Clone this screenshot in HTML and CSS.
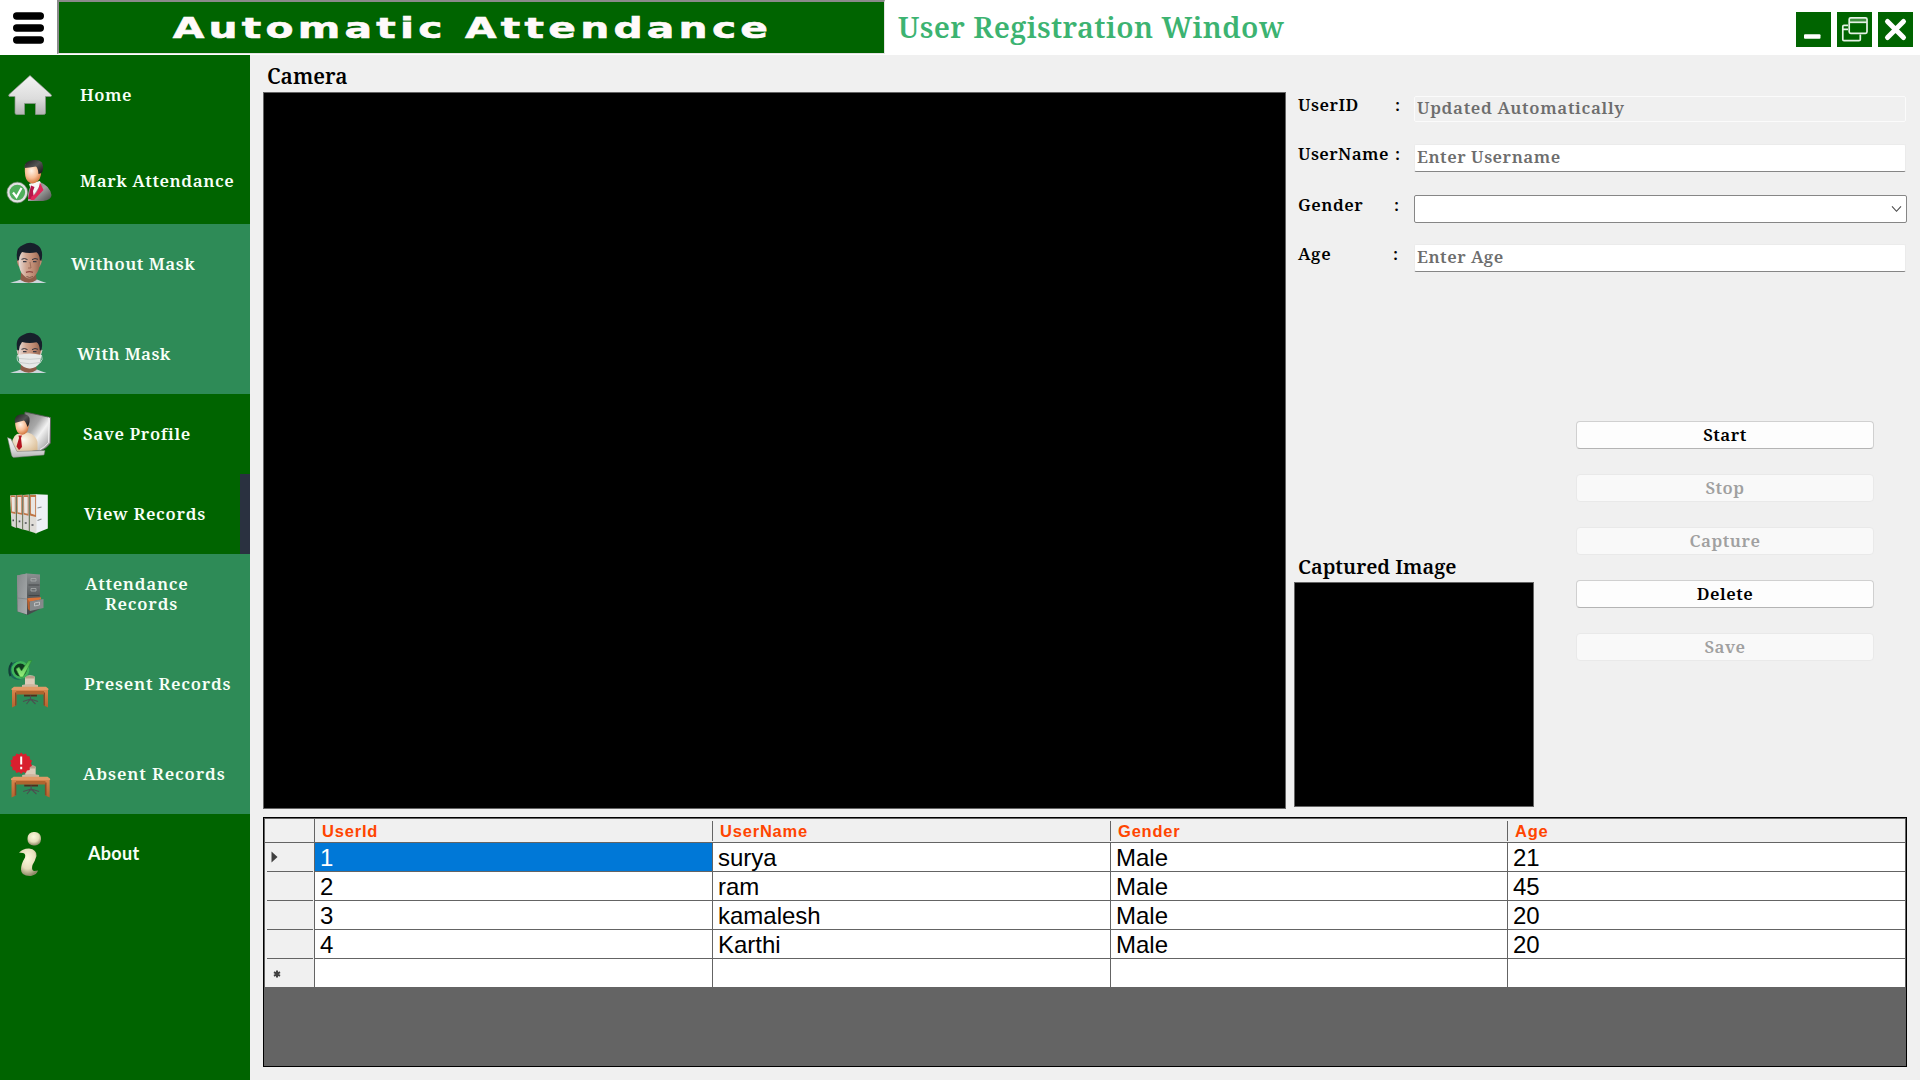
FILE: index.html
```html
<!DOCTYPE html>
<html lang="en">
<head>
<meta charset="utf-8">
<title>User Registration Window</title>
<link rel="stylesheet" href="styles.css">
</head>
<body>
<svg class="defs" width="0" height="0" aria-hidden="true">
  <defs>
    <linearGradient id="silver" x1="0" y1="0" x2="0" y2="1"><stop offset="0" stop-color="#f4f4f4"/><stop offset=".6" stop-color="#dcdcdc"/><stop offset="1" stop-color="#b4b4b4"/></linearGradient>
    <linearGradient id="panel" x1="0" y1="0" x2="1" y2="1"><stop offset="0" stop-color="#777"/><stop offset=".4" stop-color="#a8a8a8"/><stop offset=".6" stop-color="#f2f2f2"/><stop offset="1" stop-color="#8a8a8a"/></linearGradient>
    <radialGradient id="skin" cx=".4" cy=".35" r=".75"><stop offset="0" stop-color="#fff3e8"/><stop offset=".5" stop-color="#f7bd94"/><stop offset="1" stop-color="#c95f22"/></radialGradient>
    <linearGradient id="hair" x1="0" y1="0" x2="1" y2="1"><stop offset="0" stop-color="#1a1a1a"/><stop offset=".5" stop-color="#555"/><stop offset="1" stop-color="#111"/></linearGradient>
    <linearGradient id="suit" x1="0" y1="0" x2="1" y2="1"><stop offset="0" stop-color="#777"/><stop offset=".5" stop-color="#a2a2a2"/><stop offset="1" stop-color="#4a4a4a"/></linearGradient>
    <radialGradient id="shirt" cx=".45" cy=".35" r=".7"><stop offset="0" stop-color="#fffaf0"/><stop offset="1" stop-color="#d9bb92"/></radialGradient>
    <linearGradient id="face" x1="0" y1="0" x2="1" y2="0"><stop offset="0" stop-color="#e6dcd8"/><stop offset=".35" stop-color="#d2a792"/><stop offset=".7" stop-color="#bd8870"/><stop offset="1" stop-color="#93644f"/></linearGradient>
    <linearGradient id="wood" x1="0" y1="0" x2="0" y2="1"><stop offset="0" stop-color="#d9894f"/><stop offset="1" stop-color="#b4632f"/></linearGradient>
    <linearGradient id="steel" x1="0" y1="0" x2="0" y2="1"><stop offset="0" stop-color="#8d9193"/><stop offset=".5" stop-color="#5a5e60"/><stop offset="1" stop-color="#44484a"/></linearGradient>
    <linearGradient id="steelside" x1="0" y1="0" x2="1" y2="1"><stop offset="0" stop-color="#85898b"/><stop offset="1" stop-color="#a9adaf"/></linearGradient>
    <linearGradient id="tick" x1="0" y1="0" x2="0" y2="1"><stop offset="0" stop-color="#3fae4a"/><stop offset="1" stop-color="#9cf27e"/></linearGradient>
    <radialGradient id="ivory" cx=".45" cy=".35" r=".65"><stop offset="0" stop-color="#fdf9df"/><stop offset=".6" stop-color="#e6dfbc"/><stop offset="1" stop-color="#8f8a68"/></radialGradient>
    <g id="head">
      <path d="M10 49Q18 46.500 21 45.500H37Q41 47 46.500 49Z" fill="#ccd6dc"/>
      <path d="M21 39L20.500 46Q29 51.500 36.500 46L36 39Z" fill="#8e5d48"/>
      <path d="M17.300 25Q16.200 27 18.500 32L19.500 33 20 25ZM41.500 25Q42.600 27 40 32L39 33 38.500 25Z" fill="#c08a72"/>
      <path d="M18.500 20Q18 34 21.500 39 26 44.500 29.500 44.500 33 44.500 37 39 40.500 34 40.500 20 36 15 29 15 21 15 18.500 20Z" fill="url(#face)"/>
      <path d="M17.500 27Q14.500 14 23 11 31 6.500 38 11.500 44 16 41.300 27L39.800 26Q39.500 20 36.500 18.300 29 20 22 18 19 22 19 26Z" fill="#17202b"/>
      <path d="M21.500 25.300Q24.500 23.600 27.500 25.600M32 25.600Q35 23.600 38 25.300" fill="none" stroke="#33333d" stroke-width="1"/>
      <path d="M23 27.600H26.500M33 27.600H36.500" stroke="#3a3a44" stroke-width="1.100"/>
    </g>
    <g id="desk">
      <path d="M25 32V23.500Q26 21.700 30 21.700 34.500 21.800 34.800 24V32Z" fill="#dccbb8"/>
      <path d="M25.300 22.500H34.500V25H25.300Z" fill="#b89f89"/>
      <path d="M22 31.500Q30 29.500 38 31.500V34H22Z" fill="#cdb7a1"/>
      <path d="M24 41H37V43H24Z" fill="#4e2e20"/>
      <path d="M30.500 42V47M23 48L30.500 45.500 38 48M26.500 50.500L30.500 45.500 35.500 50.500" stroke="#4c4f51" stroke-width="1.100" fill="none"/>
      <path d="M12 35V54L16.200 52V39.500H44V52L48 54V35Z" fill="url(#wood)"/>
      <path d="M15 39V52.500L16.500 51.500V39ZM43.500 39V51.500L45 52.500V39Z" fill="#8a4a26"/>
      <path d="M14 33.300H46L48.400 35.300V36.500H11.500V35.300Z" fill="#e09a66"/>
      <path d="M16.200 37.500H44V41H16.200Z" fill="#b0652f"/>
    </g>
  </defs>
</svg>

<div class="window">
  <header class="topbar">
    <button class="menu" aria-label="Menu">
      <svg width="31" height="32" viewBox="0 0 31 32"><path d="M3.700 4H27.300M3.700 16H27.300M3.700 28H27.300" stroke="#000" stroke-width="7.400" stroke-linecap="round"/></svg>
    </button>
    <div class="brand"><span class="brand-text">Automatic Attendance</span></div>
    <h1 class="page-title">User Registration Window</h1>
    <div class="window-buttons">
      <svg width="35" height="35" viewBox="0 0 35 35"><rect width="35" height="35" fill="#006400"/><rect x="8" y="22.300" width="16.500" height="4.400" rx="1" fill="#fff"/></svg>
      <svg width="35" height="35" viewBox="0 0 35 35"><rect width="35" height="35" fill="#006400"/><path d="M13 6.500H29V10.500H13Z" fill="#3f8f3f"/><g fill="none" stroke="#e6f2e6" stroke-width="1.700"><rect x="12.200" y="5.800" width="17.800" height="15.500" rx="1.500"/><path d="M12.500 10.300H30"/><path d="M11 13.300H7Q5.800 13.300 5.800 14.500V27.500Q5.800 28.700 7 28.700H22Q23.300 28.700 23.300 27.500V22.500M6 17.300H11"/></g></svg>
      <svg width="35" height="35" viewBox="0 0 35 35"><rect width="35" height="35" fill="#006400"/><path d="M9.500 9.500L25.500 25.500M25.500 9.500L9.500 25.500" stroke="#fff" stroke-width="5" stroke-linecap="round"/></svg>
    </div>
  </header>

  <div class="body">
    <nav class="sidebar">
      <a class="item home">
        <svg class="icon" viewBox="0 0 60 60"><path d="M30 10.500L9 29.500Q8 31.500 10 31.500H15V48Q15 49.500 17 49.500H24.500V38.500H35.500V49.500H43.500Q45.500 49.500 45.500 48V31.500H50.500Q52.500 31 51 29.500Z" fill="url(#silver)" stroke="#8e958e" stroke-width=".7"/></svg>
        <span class="label">Home</span>
      </a>
      <a class="item mark">
        <svg class="icon" viewBox="0 0 60 60"><path d="M28 49Q27 36 34 32.500L40 31Q50 35 51.500 44 51.500 49 43 50H28Z" fill="url(#suit)"/><path d="M29 33L35 31 40 30 41 33 33 45Z" fill="#f7f7f7"/><path d="M31 34.500L34.500 36 33 40 34 48H28Z" fill="#b8154a"/><path d="M40 31.500L43.500 39 34 49H30.500L31.500 45.500Q38 43 40 31.500Z" fill="#e02859"/><path d="M25 13Q24 28 28 30.500 33 34.500 38 30 42 27 41.500 13Z" fill="url(#skin)"/><path d="M24.500 17Q24 12 29 10 38 7.500 42 11.500 44.500 18 41.500 22L38.500 23Q38 17 36 15.500 29 16.500 24.500 17Z" fill="url(#hair)"/><circle cx="17.300" cy="41.500" r="9" fill="#4fae5b" stroke="#e2e2e2" stroke-width="2.400"/><circle cx="17.300" cy="41.500" r="10.400" fill="none" stroke="#8c8c8c" stroke-width=".6"/><path d="M13 41.500L16.500 46 21.500 37" fill="none" stroke="#fff" stroke-width="2.200"/></svg>
        <span class="label">Mark Attendance</span>
      </a>
      <div class="submenu">
        <a class="item without">
          <svg class="icon" viewBox="0 0 60 60"><use href="#head"/><path d="M30 28L31 34H28" fill="none" stroke="#9c6a55" stroke-width=".9"/><path d="M26 38.300Q29.500 37 33 38.300" fill="none" stroke="#8d4740" stroke-width="1.400"/><path d="M26.500 42.500Q29.500 44.500 33 42.500" fill="none" stroke="#7d5848" stroke-width="1"/></svg>
          <span class="label">Without Mask</span>
        </a>
        <a class="item with">
          <svg class="icon" viewBox="0 0 60 60"><use href="#head"/><path d="M18.500 31L17 26M40.500 31L42 26M20 39Q16 37 17.500 31M40 39Q43.500 36 41.500 31" fill="none" stroke="#dfe6e4" stroke-width=".8"/><path d="M18 31Q29.500 28 41.500 31L40 39Q36 44 30 44.500 23 44 19.500 39Z" fill="#e8e9e8"/><path d="M19 34.500Q29.500 36 41 34.500M19.500 38.500Q29.500 41 40 38.500" fill="none" stroke="#c3c6c5" stroke-width=".8"/></svg>
          <span class="label">With Mask</span>
        </a>
      </div>
      <a class="item save">
        <svg class="icon" viewBox="0 0 60 60"><path d="M25 8L50.500 13.500V39Q46 45 40 47L22 46Z" fill="url(#panel)" stroke="#555" stroke-width=".8"/><path d="M48.500 13.500V38.500Q45 43 40 45.500" fill="none" stroke="#eee" stroke-width=".9"/><path d="M11.500 47Q11 33 17 30L28 28.500Q36 31 37.500 38V46L20 49Z" fill="url(#shirt)"/><path d="M15 16Q15 27 19 29.500 23.500 32.500 27 28 29.500 24 28.500 15Z" fill="url(#skin)"/><path d="M15 19Q13.500 12 20 10.500 28 9 29.500 14 30 20 27.500 23 26 18 24 16.500 19 17.500 15 19Z" fill="url(#hair)"/><path d="M18.500 31.500H22L21 34 22 43 19 46 16.500 42.500 19 34Z" fill="#b3141f"/><path d="M7.500 33.500L11 35 17 47.500 45 46.500 44 51 13.500 53.500Q12 53 11.500 51Z" fill="url(#silver)" stroke="#777" stroke-width=".5"/></svg>
        <span class="label">Save Profile</span>
      </a>
      <a class="item view">
        <svg class="icon" viewBox="0 0 60 60"><path d="M36 10.300L47.800 10.800V44.500L35.500 49.500Z" fill="#eef1f6"/><path d="M10 11.500L16 11V44L11.500 42Z" fill="#d9d7d3"/><path d="M16.500 11L22.500 10.800V45.500L16.800 43.500Z" fill="#d9d7d3"/><path d="M22.800 11L29 10.500V47L23 45.500Z" fill="#d9d7d3"/><path d="M29.500 10.500L36.500 10.300V49.500L29.500 47.300Z" fill="#dfdcd8"/><path d="M10.500 11.500H15.500L15.500 30 11.200 29ZM17 11.300H22V30.700L17.300 29.700ZM23.300 11.200H28.500V31.700L23.500 30.500ZM30 11H36V33L30 31.500Z" fill="#bf7444"/><path d="M11.300 13H14.800V28L12 27.500ZM17.600 13H21.300V29L17.900 28.300ZM24 13H27.700V29.800L24.200 29ZM30.800 13H35.200V31L30.900 29.500Z" fill="#e9e6e3"/><path d="M16.300 11V44M22.700 11V46M29.200 11V47.500" stroke="#75695f" stroke-width=".8"/><path d="M12.500 36.300H14M18.700 37.300H20.300M24.800 39H26.700M31.500 41H33.500" stroke="#4d4f54" stroke-width="1.700"/><path d="M37.500 24L41.500 23M37.500 36.500L41.500 35" stroke="#85888c" stroke-width="1.100"/></svg>
        <span class="label">View Records</span>
      </a>
      <div class="submenu three">
        <a class="item attendance">
          <svg class="icon" viewBox="0 0 60 60"><path d="M17 11.500L27 9.500 40 10.500V45L27.500 51 17.500 47.500Z" fill="url(#steel)"/><path d="M17 11.500L27 9.500V50.500L17.500 47.500Z" fill="url(#steelside)"/><path d="M17.500 34L27 35" stroke="#7d8284" stroke-width=".8"/><path d="M28.500 21H39.500M28.500 31.500H39.500" stroke="#3c4042" stroke-width=".8"/><path d="M31 14.500H36V17H31ZM31 24.500H36V27H31Z" fill="none" stroke="#a9adad" stroke-width=".8"/><path d="M27 34.500L29 34 41 33.300V35.500L29 38Z" fill="#d9733a"/><path d="M29.500 37.500L43.500 35V44L30 47Z" fill="#85898b"/><path d="M34.500 39L39.500 38V41L34.500 42Z" fill="none" stroke="#c9cccc" stroke-width=".8"/><path d="M27 35L29.500 37.500 30 47 28 45Z" fill="#b9602f"/></svg>
          <span class="label">Attendance<br><span class="second">Records</span></span>
        </a>
        <a class="item present">
          <svg class="icon" viewBox="0 0 60 60"><use href="#desk" y="-.5"/><circle cx="18" cy="16.500" r="9.300" fill="#1b6a5a"/><path d="M10.500 22Q7.500 15 12 8.500" fill="none" stroke="#123f38" stroke-width="2"/><circle cx="20.300" cy="16" r="7.700" fill="#0f3a20" stroke="#3fb45a" stroke-width="2.600"/><path d="M16 15L19 13 21.500 17 28.500 6.500 31.800 6.500 23 23H20Z" fill="url(#tick)" stroke="#2c8c34" stroke-width=".6"/></svg>
          <span class="label">Present Records</span>
        </a>
        <a class="item absent">
          <svg class="icon" viewBox="0 0 60 60"><use href="#desk" transform="matrix(1.060 0 0 1 -1.200 -.5)"/><path d="M21.200 8.500l2 2 2.800-1 1 2.600 2.800.3 0 2.800 2.300 1.600-1.200 2.400 1.200 2.600-2.400 1.500 0 2.800-2.800.3-1.100 2.600-2.700-.9-2 2-2-2-2.800.9-1-2.600-2.800-.3 0-2.800-2.300-1.600 1.200-2.400-1.200-2.600 2.400-1.500 0-2.800 2.700-.3 1.100-2.600 2.800 1z" fill="#d91f2e"/><path d="M21.200 12.500V20.500M21.200 22.800V25.300" stroke="#fff" stroke-width="2"/></svg>
          <span class="label">Absent Records</span>
        </a>
      </div>
      <a class="item about">
        <svg class="icon" viewBox="0 0 60 60"><rect x="27.500" y="8" width="13.500" height="13.500" rx="6" fill="url(#ivory)"/><path d="M19 29Q22 24.500 29 24.500 37 25.500 36.500 32 35 37 32.500 41 31 46 34 47 36.500 46.500 38 46.500 37 50.500 31 52 21 52.500 21 45.500 21 40 25 33.500 26 29.500 23 29 20.500 28.500 19 29Z" fill="url(#ivory)"/></svg>
        <span class="label">About</span>
      </a>
    </nav>

    <main class="content">
      <section class="camera">
        <h2 class="caption">Camera</h2>
        <div class="preview"></div>
      </section>

      <section class="side">
        <form class="form">
          <div class="row user-id"><span class="name">UserID</span><span class="colon">:</span><input class="field disabled" placeholder="Updated Automatically" disabled></div>
          <div class="row user-name"><span class="name">UserName</span><span class="colon">:</span><input class="field" placeholder="Enter Username"></div>
          <div class="row gender"><span class="name">Gender</span><span class="colon">:</span><div class="combo"><svg width="11" height="8" viewBox="0 0 11 8"><path d="M1 1.300L5.500 6.300 10 1.300" fill="none" stroke="#4a4a4a" stroke-width="1.100"/></svg></div></div>
          <div class="row age"><span class="name">Age</span><span class="colon">:</span><input class="field" placeholder="Enter Age"></div>
        </form>
        <div class="lower">
          <div class="captured">
            <h2 class="caption">Captured Image</h2>
            <div class="thumb"></div>
          </div>
          <div class="actions">
            <button class="btn">Start</button>
            <button class="btn" disabled>Stop</button>
            <button class="btn" disabled>Capture</button>
            <button class="btn">Delete</button>
            <button class="btn" disabled>Save</button>
          </div>
        </div>
      </section>

      <section class="records">
        <div class="grid">
          <div class="corner"></div><div class="th">UserId</div><div class="th">UserName</div><div class="th">Gender</div><div class="th last">Age</div>
          <div class="rh"><svg width="7" height="12" viewBox="0 0 7 12"><path d="M.5 .5L6.500 6 .5 11.500Z" fill="#404040"/></svg></div><div class="td selected">1</div><div class="td">surya</div><div class="td">Male</div><div class="td">21</div>
          <div class="rh"></div><div class="td">2</div><div class="td">ram</div><div class="td">Male</div><div class="td">45</div>
          <div class="rh"></div><div class="td">3</div><div class="td">kamalesh</div><div class="td">Male</div><div class="td">20</div>
          <div class="rh"></div><div class="td">4</div><div class="td">Karthi</div><div class="td">Male</div><div class="td">20</div>
          <div class="rh new"><svg width="8" height="8" viewBox="0 0 8 8"><path d="M4 .5V7.500M1 2.200L7 5.800M7 2.200L1 5.800" stroke="#404040" stroke-width="2"/></svg></div><div class="td"></div><div class="td"></div><div class="td"></div><div class="td"></div>
        </div>
      </section>
    </main>
  </div>
</div>
</body>
</html>
```

FILE: styles.css
```css
* { box-sizing: border-box; }
body {
  margin: 0;
  background: #f0f0f0;
  color: #000;
  font: 600 17px/20px "Noto Serif", "DejaVu Serif", serif;
  letter-spacing: .5px;
}
h1, h2 { margin: 0; font-weight: 600; }
button, input { font: inherit; letter-spacing: inherit; }
svg { display: block; flex: none; }
.defs { position: absolute; }
.window { width: 1920px; height: 1080px; display: flex; flex-direction: column; overflow: hidden; }

/* Title bar */
.topbar { height: 55px; display: flex; align-items: flex-start; background: #fff; }
.menu { width: 57px; height: 55px; padding: 12px 0 0 13px; display: flex; align-items: flex-start; border: 0; background: none; }
.brand {
  width: 828px; height: 54px;
  display: flex; justify-content: center; align-items: center;
  border: 2px solid; border-color: #8a8a8a #e3e3e3 #e3e3e3 #8a8a8a;
  border-right-width: 1px; border-bottom-width: 1px;
  background: #006400; color: #fffafa;
}
.brand-text {
  padding: 1px 0 0 2px;
  font: 700 29px/40px "DejaVu Sans", sans-serif;
  letter-spacing: 3px;
  white-space: nowrap;
  -webkit-text-stroke: .6px #fffafa;
  transform: scaleX(1.407);
}
.page-title {
  margin-left: 13px;
  color: #3cb371;
  font-size: 29px; line-height: 54px;
  letter-spacing: .4px;
  white-space: nowrap;
}
.window-buttons { display: flex; gap: 6px; margin-left: auto; padding: 12px 7px 0 0; }

.body { flex: 1; display: flex; }

/* Sidebar */
.sidebar { width: 250px; background: #006400; color: #f8fff8; }
.item { height: 80px; display: flex; align-items: center; }
.icon { width: 60px; height: 60px; }
.label { white-space: nowrap; }
.mark { height: 86px; margin-top: 3px; }
.submenu { display: flex; flex-direction: column; gap: 10px; height: 170px; background: #2e8b57; }
.three { height: 260px; }
.home .label, .mark .label { margin-left: 20px; letter-spacing: .55px; }
.without .label { margin-left: 11px; }
.with .label { margin-left: 17px; letter-spacing: .35px; }
.save .label { margin-left: 23px; letter-spacing: .6px; }
.view { border-right: 10px solid #2a3140; }
.view .label { margin-left: 24px; letter-spacing: .7px; }
.attendance .label { margin-left: 25px; letter-spacing: .7px; }
.second { margin-left: 20px; letter-spacing: .8px; }
.present .label { margin-left: 24px; letter-spacing: .77px; }
.absent .label { margin-left: 23px; letter-spacing: .87px; }
.about .label { margin: -2px 0 0 28px; font: 700 18px/20px Lato, sans-serif; letter-spacing: .3px; }

/* Work area */
.content {
  flex: 1;
  padding: 0 13px 13px;
  display: grid;
  grid-template-columns: 1023px 613px;
  grid-template-rows: 754px 250px;
  gap: 8px;
}
.caption { height: 37px; padding: 7px 0 0 4px; font-size: 21px; line-height: 28px; letter-spacing: 0; white-space: nowrap; }
.preview { height: 717px; border: 1px solid #646464; background: #000; }

/* Form */
.form { height: 366px; padding-top: 41px; display: flex; flex-direction: column; }
.row { display: grid; grid-template-columns: 100px 21px 492px; align-items: start; }
.name, .colon { margin-top: -1px; white-space: nowrap; }
.name { padding-left: 4px; }
.colon { padding-left: 1px; }
.user-id { height: 48px; }
.user-name { height: 51px; }
.gender { height: 49px; }
.user-name .name, .user-name .colon { margin-top: 0; }
.user-name .name { letter-spacing: .4px; }
.gender .name, .gender .colon { margin-top: 0; }
.gender .colon { padding-left: 0; }
.age .name, .age .colon { margin-top: 0; }
.age .name { letter-spacing: .9px; }
.age .colon { padding-left: 0; margin-left: -1px; }
.field {
  width: 492px; height: 28px; padding: 0 0 4px 2px; margin-left: -1px;
  border: 1px solid #ebebeb; border-bottom: 1px solid #868686; border-radius: 2px;
  background: #fff; color: #000; outline: 0;
}
.field::placeholder { color: #6d6d6d; opacity: 1; }
.field.disabled { height: 26px; border: 1px solid #fbfbfb; background: #f0f0f0; letter-spacing: .65px; }
.combo {
  width: 493px; height: 28px; margin-left: -1px; padding-right: 4px;
  display: flex; align-items: center; justify-content: flex-end;
  border: 1px solid #868686; border-radius: 2px; background: #fff;
}

/* Capture preview and actions */
.lower { display: flex; gap: 42px; }
.captured { width: 240px; padding-top: 124px; }
.captured .caption { padding-top: 8px; font-size: 20px; }
.thumb { height: 225px; border: 1px solid #646464; background: #000; }
.actions { display: flex; flex-direction: column; gap: 25px; }
.btn {
  width: 298px; height: 28px; padding: 0;
  border: 1px solid #d0d0d0; border-bottom-color: #b4b4b4; border-radius: 4px;
  background: #fdfdfd; color: #000; line-height: 20px;
}
.btn:disabled { border-color: #e9e9e9; background: #f9f9f9; color: #a0a0a0; }

/* Records table */
.records { grid-column: 1 / -1; width: 1644px; border: 1px solid #000; background: #646464; }
.grid {
  display: grid;
  grid-template-columns: 49px 397px 397px 396px 397px;
  grid-template-rows: 23px repeat(5, 28px);
  gap: 1px;
  padding: 1px;
  letter-spacing: 0;
}
.corner { background: #f0f0f0; }
.th {
  margin-right: -1px; padding: 1px 0 0 7px;
  background: linear-gradient(#646464, #646464) right 2px / 1px 20px no-repeat #f0f0f0;
  color: #ff4500;
  font: 700 16.500px/22px "Liberation Sans", Arial, sans-serif;
  letter-spacing: .8px;
}
.th.last { margin-right: 0; background: #f0f0f0; }
.rh {
  margin-bottom: -1px; padding: 8px 0 0 6px;
  background: linear-gradient(#646464, #646464) 2px bottom / 46px 1px no-repeat #f0f0f0;
}
.rh.new { margin-bottom: 0; padding: 11px 0 0 8px; background: #f0f0f0; }
.td {
  padding-left: 5px;
  background: #fff;
  font: 400 24px/29px "Liberation Sans", Arial, sans-serif;
}
.td.selected { background: #0078d7; color: #fff; }
```
